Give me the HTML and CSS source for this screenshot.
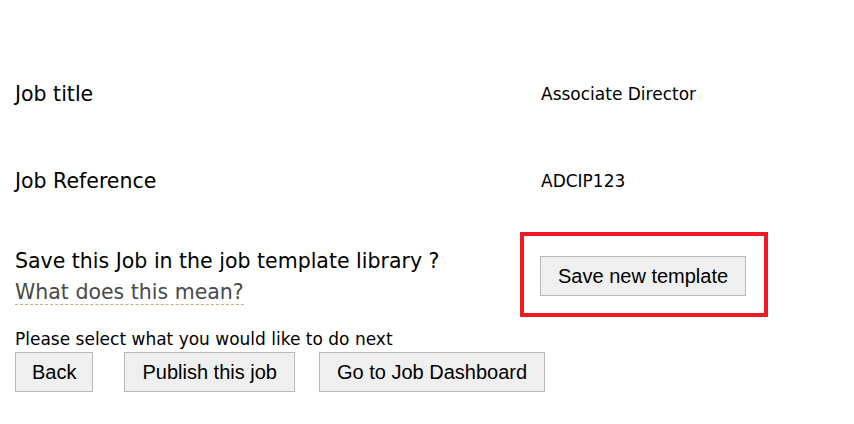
FILE: index.html
```html
<!DOCTYPE html>
<html lang="en">
<head>
  <meta charset="UTF-8" />
  <title>Job Summary</title>
  <link rel="stylesheet" href="styles.css">
</head>
<body>
  <div class="summary">
    <div class="row">
      <div class="label">Job title</div>
      <div class="value">Associate Director</div>
    </div>
    <div class="row">
      <div class="label">Job Reference</div>
      <div class="value">ADCIP123</div>
    </div>
    <div class="row template-row">
      <div class="label">
        Save this Job in the job template library ?<br>
        <a class="help-link" href="#">What does this mean?</a>
      </div>
      <div class="value">
        <div class="highlight">
          <button class="btn">Save new template</button>
        </div>
      </div>
    </div>
  </div>

  <div class="next-steps">
    <p class="hint">Please select what you would like to do next</p>
    <div class="actions">
      <button class="btn btn-back">Back</button>
      <button class="btn btn-publish">Publish this job</button>
      <button class="btn">Go to Job Dashboard</button>
    </div>
  </div>
</body>
</html>
```

FILE: styles.css
```css
body {
  margin: 0;
  padding: 0 15px;
  font-family: 'DejaVu Sans', Verdana, sans-serif;
  color: #000;
  background: #fff;
}

.summary {
  padding-top: 80px;
}

.row {
  display: grid;
  grid-template-columns: 505px 1fr;
  align-items: center;
  height: 28px;
  margin-bottom: 59px;
}

.label {
  font-size: 20.5px;
  line-height: 28px;
}

.value {
  font-size: 17px;
}

.row .value {
  padding-left: 21px;
}

.template-row {
  height: auto;
  margin-top: -22px;
  margin-bottom: 0;
}

.template-row .label {
  line-height: 31px;
  padding-top: 4px;
}

.template-row .value {
  padding-left: 0;
}

.help-link {
  color: #4a4a4a;
  text-decoration: none;
  border-bottom: 1px dashed #c8b070;
}

.highlight {
  display: inline-block;
  border: 4px solid #ed1c24;
  padding: 20px 18px 17px 16px;
}

.btn {
  font-family: 'Liberation Sans', Arial, sans-serif;
  font-size: 20px;
  color: #000;
  background: #efefef;
  border: 1px solid #b9b9b9;
  height: 40px;
  padding: 0 17px;
  cursor: pointer;
}

.next-steps {
  margin-top: 12px;
}

.hint {
  margin: 0 0 3px;
  font-size: 17px;
  line-height: 20px;
}

.actions {
  display: flex;
}

.btn-back {
  padding: 0 16px;
  margin-right: 31px;
}

.btn-publish {
  margin-right: 24px;
}
```
